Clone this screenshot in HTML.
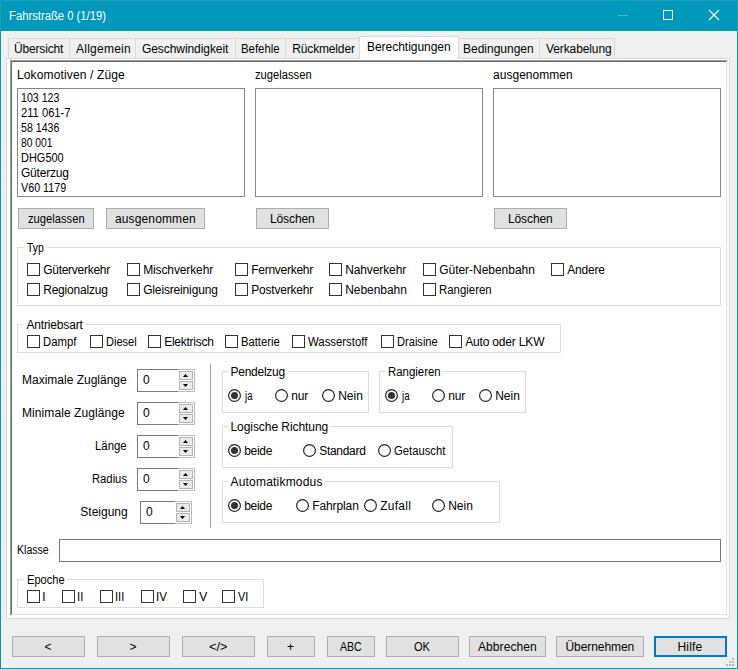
<!DOCTYPE html>
<html><head><meta charset="utf-8"><style>
html,body{margin:0;padding:0;width:738px;height:669px;overflow:hidden;background:#f0f0f0;position:relative}
body>div,body>svg{position:absolute}
.t{font-family:"Liberation Sans", sans-serif;line-height:15px;white-space:nowrap;transform-origin:0 0}
</style></head><body>
<div style="left:0px;top:0px;width:738px;height:31px;background:#0099bc"></div>
<div style="left:0px;top:0px;width:1px;height:669px;background:#0099bc"></div>
<div style="left:737px;top:0px;width:1px;height:669px;background:#0099bc"></div>
<div style="left:0px;top:668px;width:738px;height:1px;background:#0099bc"></div>
<div style="left:0px;top:0px;width:738px;height:1px;background:#1ba0c0"></div>
<div style="left:0px;top:0px;width:1px;height:31px;background:#1ba0c0"></div>
<div style="left:737px;top:0px;width:1px;height:31px;background:#1ba0c0"></div>
<div style="left:618px;top:15px;width:10px;height:1px;background:#4db8d0"></div>
<div style="left:663px;top:10px;width:10px;height:10px;border:1px solid #fff;box-sizing:border-box"></div>
<svg style="position:absolute;left:708px;top:9px" width="12" height="12" viewBox="0 0 12 12"><path d="M1 1L11 11M11 1L1 11" stroke="#fff" stroke-width="1.1"/></svg>
<div style="left:8px;top:38px;width:62px;height:21px;background:#f0f0f0;border:1px solid #d9d9d9;box-sizing:border-box"></div>
<div style="left:69px;top:38px;width:67px;height:21px;background:#f0f0f0;border:1px solid #d9d9d9;box-sizing:border-box"></div>
<div style="left:135px;top:38px;width:101px;height:21px;background:#f0f0f0;border:1px solid #d9d9d9;box-sizing:border-box"></div>
<div style="left:235px;top:38px;width:51px;height:21px;background:#f0f0f0;border:1px solid #d9d9d9;box-sizing:border-box"></div>
<div style="left:285px;top:38px;width:76px;height:21px;background:#f0f0f0;border:1px solid #d9d9d9;box-sizing:border-box"></div>
<div style="left:458px;top:38px;width:82px;height:21px;background:#f0f0f0;border:1px solid #d9d9d9;box-sizing:border-box"></div>
<div style="left:539px;top:38px;width:76px;height:21px;background:#f0f0f0;border:1px solid #d9d9d9;box-sizing:border-box"></div>
<div style="left:6px;top:58px;width:724px;height:561px;background:#fff;border:1px solid #d9d9d9;box-sizing:border-box"></div>
<div style="left:359px;top:36px;width:100px;height:23px;background:#fff;border:1px solid #d9d9d9;border-bottom:none;box-sizing:border-box"></div>
<div style="left:10px;top:60px;width:718px;height:556px;border-top:1px solid #a0a0a0;border-left:1px solid #a0a0a0;border-right:1px solid #fff;border-bottom:1px solid #fff;box-sizing:border-box"></div>
<div style="left:11px;top:61px;width:716px;height:554px;border-top:1px solid #696969;border-left:1px solid #696969;border-right:1px solid #e3e3e3;border-bottom:1px solid #e3e3e3;box-sizing:border-box"></div>
<div style="left:17px;top:88px;width:228px;height:109px;background:#fff;border:1px solid #828790;box-sizing:border-box"></div>
<div style="left:255px;top:88px;width:228px;height:109px;background:#fff;border:1px solid #828790;box-sizing:border-box"></div>
<div style="left:493px;top:88px;width:228px;height:109px;background:#fff;border:1px solid #828790;box-sizing:border-box"></div>
<div style="left:18px;top:208px;width:76px;height:21px;background:#e1e1e1;border:1px solid #adadad;box-sizing:border-box"></div>
<div style="left:106px;top:208px;width:99px;height:21px;background:#e1e1e1;border:1px solid #adadad;box-sizing:border-box"></div>
<div style="left:256px;top:208px;width:73px;height:21px;background:#e1e1e1;border:1px solid #adadad;box-sizing:border-box"></div>
<div style="left:494px;top:208px;width:73px;height:21px;background:#e1e1e1;border:1px solid #adadad;box-sizing:border-box"></div>
<div style="left:17px;top:247px;width:704px;height:59px;border:1px solid #dcdcdc;box-sizing:border-box"></div>
<div style="left:24px;top:246px;width:22px;height:3px;background:#fff"></div>
<div style="left:27px;top:263px;width:13px;height:13px;background:#fff;border:1px solid #333;box-sizing:border-box"></div>
<div style="left:127px;top:263px;width:13px;height:13px;background:#fff;border:1px solid #333;box-sizing:border-box"></div>
<div style="left:235px;top:263px;width:13px;height:13px;background:#fff;border:1px solid #333;box-sizing:border-box"></div>
<div style="left:329px;top:263px;width:13px;height:13px;background:#fff;border:1px solid #333;box-sizing:border-box"></div>
<div style="left:423px;top:263px;width:13px;height:13px;background:#fff;border:1px solid #333;box-sizing:border-box"></div>
<div style="left:551px;top:263px;width:13px;height:13px;background:#fff;border:1px solid #333;box-sizing:border-box"></div>
<div style="left:27px;top:283px;width:13px;height:13px;background:#fff;border:1px solid #333;box-sizing:border-box"></div>
<div style="left:127px;top:283px;width:13px;height:13px;background:#fff;border:1px solid #333;box-sizing:border-box"></div>
<div style="left:235px;top:283px;width:13px;height:13px;background:#fff;border:1px solid #333;box-sizing:border-box"></div>
<div style="left:329px;top:283px;width:13px;height:13px;background:#fff;border:1px solid #333;box-sizing:border-box"></div>
<div style="left:423px;top:283px;width:13px;height:13px;background:#fff;border:1px solid #333;box-sizing:border-box"></div>
<div style="left:17px;top:324px;width:544px;height:29px;border:1px solid #dcdcdc;box-sizing:border-box"></div>
<div style="left:24px;top:323px;width:62px;height:3px;background:#fff"></div>
<div style="left:27px;top:335px;width:13px;height:13px;background:#fff;border:1px solid #333;box-sizing:border-box"></div>
<div style="left:90px;top:335px;width:13px;height:13px;background:#fff;border:1px solid #333;box-sizing:border-box"></div>
<div style="left:148px;top:335px;width:13px;height:13px;background:#fff;border:1px solid #333;box-sizing:border-box"></div>
<div style="left:225px;top:335px;width:13px;height:13px;background:#fff;border:1px solid #333;box-sizing:border-box"></div>
<div style="left:292px;top:335px;width:13px;height:13px;background:#fff;border:1px solid #333;box-sizing:border-box"></div>
<div style="left:381px;top:335px;width:13px;height:13px;background:#fff;border:1px solid #333;box-sizing:border-box"></div>
<div style="left:449px;top:335px;width:13px;height:13px;background:#fff;border:1px solid #333;box-sizing:border-box"></div>
<div style="left:137px;top:369px;width:58px;height:23px;background:#fff;border:1px solid #7a7a7a;border-right-color:#b9bcc2;box-sizing:border-box"></div>
<div style="left:178px;top:369px;width:17px;height:23px;background:#fff;border:1px solid #b9bcc2;border-left:none;box-sizing:border-box"></div>
<div style="left:179px;top:371px;width:14px;height:9px;background:#eaeaea;border:1px solid #b4b4b4;box-sizing:border-box"></div>
<div style="left:179px;top:381px;width:14px;height:9px;background:#eaeaea;border:1px solid #b4b4b4;box-sizing:border-box"></div>
<svg style="position:absolute;left:183px;top:374px" width="5" height="3"><path d="M0 3L2.5 0L5 3Z" fill="#000"/></svg>
<svg style="position:absolute;left:183px;top:384px" width="5" height="3"><path d="M0 0L5 0L2.5 3Z" fill="#000"/></svg>
<div style="left:137px;top:402px;width:58px;height:23px;background:#fff;border:1px solid #7a7a7a;border-right-color:#b9bcc2;box-sizing:border-box"></div>
<div style="left:178px;top:402px;width:17px;height:23px;background:#fff;border:1px solid #b9bcc2;border-left:none;box-sizing:border-box"></div>
<div style="left:179px;top:404px;width:14px;height:9px;background:#eaeaea;border:1px solid #b4b4b4;box-sizing:border-box"></div>
<div style="left:179px;top:414px;width:14px;height:9px;background:#eaeaea;border:1px solid #b4b4b4;box-sizing:border-box"></div>
<svg style="position:absolute;left:183px;top:407px" width="5" height="3"><path d="M0 3L2.5 0L5 3Z" fill="#000"/></svg>
<svg style="position:absolute;left:183px;top:417px" width="5" height="3"><path d="M0 0L5 0L2.5 3Z" fill="#000"/></svg>
<div style="left:137px;top:435px;width:58px;height:23px;background:#fff;border:1px solid #7a7a7a;border-right-color:#b9bcc2;box-sizing:border-box"></div>
<div style="left:178px;top:435px;width:17px;height:23px;background:#fff;border:1px solid #b9bcc2;border-left:none;box-sizing:border-box"></div>
<div style="left:179px;top:437px;width:14px;height:9px;background:#eaeaea;border:1px solid #b4b4b4;box-sizing:border-box"></div>
<div style="left:179px;top:447px;width:14px;height:9px;background:#eaeaea;border:1px solid #b4b4b4;box-sizing:border-box"></div>
<svg style="position:absolute;left:183px;top:440px" width="5" height="3"><path d="M0 3L2.5 0L5 3Z" fill="#000"/></svg>
<svg style="position:absolute;left:183px;top:450px" width="5" height="3"><path d="M0 0L5 0L2.5 3Z" fill="#000"/></svg>
<div style="left:137px;top:468px;width:58px;height:23px;background:#fff;border:1px solid #7a7a7a;border-right-color:#b9bcc2;box-sizing:border-box"></div>
<div style="left:178px;top:468px;width:17px;height:23px;background:#fff;border:1px solid #b9bcc2;border-left:none;box-sizing:border-box"></div>
<div style="left:179px;top:470px;width:14px;height:9px;background:#eaeaea;border:1px solid #b4b4b4;box-sizing:border-box"></div>
<div style="left:179px;top:480px;width:14px;height:9px;background:#eaeaea;border:1px solid #b4b4b4;box-sizing:border-box"></div>
<svg style="position:absolute;left:183px;top:473px" width="5" height="3"><path d="M0 3L2.5 0L5 3Z" fill="#000"/></svg>
<svg style="position:absolute;left:183px;top:483px" width="5" height="3"><path d="M0 0L5 0L2.5 3Z" fill="#000"/></svg>
<div style="left:140px;top:501px;width:52px;height:23px;background:#fff;border:1px solid #7a7a7a;border-right-color:#b9bcc2;box-sizing:border-box"></div>
<div style="left:175px;top:501px;width:17px;height:23px;background:#fff;border:1px solid #b9bcc2;border-left:none;box-sizing:border-box"></div>
<div style="left:176px;top:503px;width:14px;height:9px;background:#eaeaea;border:1px solid #b4b4b4;box-sizing:border-box"></div>
<div style="left:176px;top:513px;width:14px;height:9px;background:#eaeaea;border:1px solid #b4b4b4;box-sizing:border-box"></div>
<svg style="position:absolute;left:180px;top:506px" width="5" height="3"><path d="M0 3L2.5 0L5 3Z" fill="#000"/></svg>
<svg style="position:absolute;left:180px;top:516px" width="5" height="3"><path d="M0 0L5 0L2.5 3Z" fill="#000"/></svg>
<div style="left:210px;top:364px;width:1px;height:164px;background:#a0a0a0"></div>
<div style="left:222px;top:371px;width:147px;height:42px;border:1px solid #dcdcdc;box-sizing:border-box"></div>
<div style="left:228px;top:370px;width:59px;height:3px;background:#fff"></div>
<svg style="position:absolute;left:228px;top:389px" width="13" height="13" viewBox="0 0 13 13"><circle cx="6.5" cy="6.5" r="5.9" fill="#fff" stroke="#262626" stroke-width="1.2"/><circle cx="6.5" cy="6.5" r="3.5" fill="#333"/></svg>
<svg style="position:absolute;left:275px;top:389px" width="13" height="13" viewBox="0 0 13 13"><circle cx="6.5" cy="6.5" r="5.9" fill="#fff" stroke="#262626" stroke-width="1.2"/></svg>
<svg style="position:absolute;left:322px;top:389px" width="13" height="13" viewBox="0 0 13 13"><circle cx="6.5" cy="6.5" r="5.9" fill="#fff" stroke="#262626" stroke-width="1.2"/></svg>
<div style="left:379px;top:371px;width:147px;height:42px;border:1px solid #dcdcdc;box-sizing:border-box"></div>
<div style="left:385px;top:370px;width:57px;height:3px;background:#fff"></div>
<svg style="position:absolute;left:385px;top:389px" width="13" height="13" viewBox="0 0 13 13"><circle cx="6.5" cy="6.5" r="5.9" fill="#fff" stroke="#262626" stroke-width="1.2"/><circle cx="6.5" cy="6.5" r="3.5" fill="#333"/></svg>
<svg style="position:absolute;left:432px;top:389px" width="13" height="13" viewBox="0 0 13 13"><circle cx="6.5" cy="6.5" r="5.9" fill="#fff" stroke="#262626" stroke-width="1.2"/></svg>
<svg style="position:absolute;left:479px;top:389px" width="13" height="13" viewBox="0 0 13 13"><circle cx="6.5" cy="6.5" r="5.9" fill="#fff" stroke="#262626" stroke-width="1.2"/></svg>
<div style="left:222px;top:426px;width:231px;height:42px;border:1px solid #dcdcdc;box-sizing:border-box"></div>
<div style="left:228px;top:425px;width:102px;height:3px;background:#fff"></div>
<svg style="position:absolute;left:228px;top:444px" width="13" height="13" viewBox="0 0 13 13"><circle cx="6.5" cy="6.5" r="5.9" fill="#fff" stroke="#262626" stroke-width="1.2"/><circle cx="6.5" cy="6.5" r="3.5" fill="#333"/></svg>
<svg style="position:absolute;left:303px;top:444px" width="13" height="13" viewBox="0 0 13 13"><circle cx="6.5" cy="6.5" r="5.9" fill="#fff" stroke="#262626" stroke-width="1.2"/></svg>
<svg style="position:absolute;left:378px;top:444px" width="13" height="13" viewBox="0 0 13 13"><circle cx="6.5" cy="6.5" r="5.9" fill="#fff" stroke="#262626" stroke-width="1.2"/></svg>
<div style="left:222px;top:481px;width:278px;height:42px;border:1px solid #dcdcdc;box-sizing:border-box"></div>
<div style="left:228px;top:480px;width:97px;height:3px;background:#fff"></div>
<svg style="position:absolute;left:228px;top:499px" width="13" height="13" viewBox="0 0 13 13"><circle cx="6.5" cy="6.5" r="5.9" fill="#fff" stroke="#262626" stroke-width="1.2"/><circle cx="6.5" cy="6.5" r="3.5" fill="#333"/></svg>
<svg style="position:absolute;left:296px;top:499px" width="13" height="13" viewBox="0 0 13 13"><circle cx="6.5" cy="6.5" r="5.9" fill="#fff" stroke="#262626" stroke-width="1.2"/></svg>
<svg style="position:absolute;left:364px;top:499px" width="13" height="13" viewBox="0 0 13 13"><circle cx="6.5" cy="6.5" r="5.9" fill="#fff" stroke="#262626" stroke-width="1.2"/></svg>
<svg style="position:absolute;left:432px;top:499px" width="13" height="13" viewBox="0 0 13 13"><circle cx="6.5" cy="6.5" r="5.9" fill="#fff" stroke="#262626" stroke-width="1.2"/></svg>
<div style="left:59px;top:539px;width:662px;height:23px;background:#fff;border:1px solid #7a7a7a;box-sizing:border-box"></div>
<div style="left:17px;top:579px;width:247px;height:29px;border:1px solid #dcdcdc;box-sizing:border-box"></div>
<div style="left:24px;top:578px;width:43px;height:3px;background:#fff"></div>
<div style="left:27px;top:590px;width:13px;height:13px;background:#fff;border:1px solid #333;box-sizing:border-box"></div>
<div style="left:62px;top:590px;width:13px;height:13px;background:#fff;border:1px solid #333;box-sizing:border-box"></div>
<div style="left:100px;top:590px;width:13px;height:13px;background:#fff;border:1px solid #333;box-sizing:border-box"></div>
<div style="left:141px;top:590px;width:13px;height:13px;background:#fff;border:1px solid #333;box-sizing:border-box"></div>
<div style="left:183px;top:590px;width:13px;height:13px;background:#fff;border:1px solid #333;box-sizing:border-box"></div>
<div style="left:222px;top:590px;width:13px;height:13px;background:#fff;border:1px solid #333;box-sizing:border-box"></div>
<div style="left:12px;top:636px;width:73px;height:21px;background:#e1e1e1;border:1px solid #adadad;box-sizing:border-box"></div>
<div style="left:97px;top:636px;width:73px;height:21px;background:#e1e1e1;border:1px solid #adadad;box-sizing:border-box"></div>
<div style="left:182px;top:636px;width:73px;height:21px;background:#e1e1e1;border:1px solid #adadad;box-sizing:border-box"></div>
<div style="left:267px;top:636px;width:48px;height:21px;background:#e1e1e1;border:1px solid #adadad;box-sizing:border-box"></div>
<div style="left:327px;top:636px;width:48px;height:21px;background:#e1e1e1;border:1px solid #adadad;box-sizing:border-box"></div>
<div style="left:386px;top:636px;width:73px;height:21px;background:#e1e1e1;border:1px solid #adadad;box-sizing:border-box"></div>
<div style="left:469px;top:636px;width:77px;height:21px;background:#e1e1e1;border:1px solid #adadad;box-sizing:border-box"></div>
<div style="left:556px;top:636px;width:88px;height:21px;background:#e1e1e1;border:1px solid #adadad;box-sizing:border-box"></div>
<div style="left:654px;top:636px;width:73px;height:21px;background:#e1e1e1;border:2px solid #0078d7;box-sizing:border-box"></div>
<div style="left:732px;top:658px;width:2px;height:2px;background:#b8b8b8"></div>
<div style="left:732px;top:661px;width:2px;height:2px;background:#b8b8b8"></div>
<div style="left:729px;top:661px;width:2px;height:2px;background:#b8b8b8"></div>
<div style="left:732px;top:664px;width:2px;height:2px;background:#b8b8b8"></div>
<div style="left:729px;top:664px;width:2px;height:2px;background:#b8b8b8"></div>
<div style="left:726px;top:664px;width:2px;height:2px;background:#b8b8b8"></div>
<div class="t" style="left:9.20px;top:9.34px;font-size:12px;color:#fff;transform:scaleX(0.9383)">Fahrstraße 0 (1/19)</div>
<div class="t" style="left:14.00px;top:42.34px;font-size:12px;color:#000;letter-spacing:-0.169px">Übersicht</div>
<div class="t" style="left:76.00px;top:42.34px;font-size:12px;color:#000;letter-spacing:0.248px">Allgemein</div>
<div class="t" style="left:142.00px;top:42.34px;font-size:12px;color:#000;letter-spacing:-0.074px">Geschwindigkeit</div>
<div class="t" style="left:241.00px;top:42.34px;font-size:12px;color:#000;transform:scaleX(0.9506)">Befehle</div>
<div class="t" style="left:292.30px;top:42.34px;font-size:12px;color:#000;letter-spacing:-0.158px">Rückmelder</div>
<div class="t" style="left:463.00px;top:42.34px;font-size:12px;color:#000;letter-spacing:-0.006px">Bedingungen</div>
<div class="t" style="left:546.00px;top:42.34px;font-size:12px;color:#000;letter-spacing:-0.105px">Verkabelung</div>
<div class="t" style="left:367.00px;top:40.34px;font-size:12px;color:#000;letter-spacing:-0.030px">Berechtigungen</div>
<div class="t" style="left:17.00px;top:68.34px;font-size:12px;color:#000;letter-spacing:0.134px">Lokomotiven / Züge</div>
<div class="t" style="left:255.00px;top:68.34px;font-size:12px;color:#000;transform:scaleX(0.9328)">zugelassen</div>
<div class="t" style="left:493.00px;top:68.34px;font-size:12px;color:#000;letter-spacing:0.029px">ausgenommen</div>
<div class="t" style="left:21.00px;top:91.34px;font-size:12px;color:#000;transform:scaleX(0.8832)">103 123</div>
<div class="t" style="left:21.00px;top:106.34px;font-size:12px;color:#000;transform:scaleX(0.9311)">211 061-7</div>
<div class="t" style="left:21.00px;top:121.34px;font-size:12px;color:#000;transform:scaleX(0.8832)">58 1436</div>
<div class="t" style="left:21.00px;top:136.34px;font-size:12px;color:#000;transform:scaleX(0.8588)">80 001</div>
<div class="t" style="left:21.00px;top:151.34px;font-size:12px;color:#000;transform:scaleX(0.9146)">DHG500</div>
<div class="t" style="left:21.00px;top:166.34px;font-size:12px;color:#000;letter-spacing:-0.212px">Güterzug</div>
<div class="t" style="left:21.00px;top:181.34px;font-size:12px;color:#000;transform:scaleX(0.8954)">V60 1179</div>
<div class="t" style="left:27.50px;top:212.34px;font-size:12px;color:#000;transform:scaleX(0.9328)">zugelassen</div>
<div class="t" style="left:115.00px;top:212.34px;font-size:12px;color:#000;letter-spacing:0.129px">ausgenommen</div>
<div class="t" style="left:270.00px;top:212.34px;font-size:12px;color:#000;letter-spacing:-0.116px">Löschen</div>
<div class="t" style="left:508.00px;top:212.34px;font-size:12px;color:#000;letter-spacing:-0.116px">Löschen</div>
<div class="t" style="left:26.50px;top:241.34px;font-size:12px;color:#000;transform:scaleX(0.8643)">Typ</div>
<div class="t" style="left:43.20px;top:263.34px;font-size:12px;color:#000;letter-spacing:-0.275px">Güterverkehr</div>
<div class="t" style="left:143.20px;top:263.34px;font-size:12px;color:#000;letter-spacing:-0.123px">Mischverkehr</div>
<div class="t" style="left:251.20px;top:263.34px;font-size:12px;color:#000;letter-spacing:-0.269px">Fernverkehr</div>
<div class="t" style="left:345.20px;top:263.34px;font-size:12px;color:#000;letter-spacing:-0.115px">Nahverkehr</div>
<div class="t" style="left:439.20px;top:263.34px;font-size:12px;color:#000;letter-spacing:-0.028px">Güter-Nebenbahn</div>
<div class="t" style="left:567.20px;top:263.34px;font-size:12px;color:#000;letter-spacing:-0.204px">Andere</div>
<div class="t" style="left:43.20px;top:283.34px;font-size:12px;color:#000;letter-spacing:-0.204px">Regionalzug</div>
<div class="t" style="left:143.20px;top:283.34px;font-size:12px;color:#000;letter-spacing:-0.157px">Gleisreinigung</div>
<div class="t" style="left:251.20px;top:283.34px;font-size:12px;color:#000;letter-spacing:-0.203px">Postverkehr</div>
<div class="t" style="left:345.20px;top:283.34px;font-size:12px;color:#000;letter-spacing:-0.048px">Nebenbahn</div>
<div class="t" style="left:439.20px;top:283.34px;font-size:12px;color:#000;transform:scaleX(0.9507)">Rangieren</div>
<div class="t" style="left:26.50px;top:318.34px;font-size:12px;color:#000;letter-spacing:-0.169px">Antriebsart</div>
<div class="t" style="left:43.20px;top:335.34px;font-size:12px;color:#000;transform:scaleX(0.9442)">Dampf</div>
<div class="t" style="left:106.20px;top:335.34px;font-size:12px;color:#000;transform:scaleX(0.9180)">Diesel</div>
<div class="t" style="left:164.20px;top:335.34px;font-size:12px;color:#000;letter-spacing:-0.260px">Elektrisch</div>
<div class="t" style="left:241.20px;top:335.34px;font-size:12px;color:#000;transform:scaleX(0.9357)">Batterie</div>
<div class="t" style="left:308.20px;top:335.34px;font-size:12px;color:#000;transform:scaleX(0.9471)">Wasserstoff</div>
<div class="t" style="left:397.20px;top:335.34px;font-size:12px;color:#000;transform:scaleX(0.9246)">Draisine</div>
<div class="t" style="left:465.20px;top:335.34px;font-size:12px;color:#000;letter-spacing:-0.171px">Auto oder LKW</div>
<div class="t" style="left:22.00px;top:373.34px;font-size:12px;color:#000;letter-spacing:-0.003px">Maximale Zuglänge</div>
<div class="t" style="left:143.00px;top:373.34px;font-size:12px;color:#000;letter-spacing:0.000px">0</div>
<div class="t" style="left:22.00px;top:406.34px;font-size:12px;color:#000;letter-spacing:0.081px">Minimale Zuglänge</div>
<div class="t" style="left:143.00px;top:406.34px;font-size:12px;color:#000;letter-spacing:0.000px">0</div>
<div class="t" style="left:95.00px;top:439.34px;font-size:12px;color:#000;transform:scaleX(0.9497)">Länge</div>
<div class="t" style="left:143.00px;top:439.34px;font-size:12px;color:#000;letter-spacing:0.000px">0</div>
<div class="t" style="left:92.00px;top:472.34px;font-size:12px;color:#000;transform:scaleX(0.9370)">Radius</div>
<div class="t" style="left:143.00px;top:472.34px;font-size:12px;color:#000;letter-spacing:0.000px">0</div>
<div class="t" style="left:80.30px;top:505.34px;font-size:12px;color:#000;letter-spacing:0.000px">Steigung</div>
<div class="t" style="left:146.00px;top:505.34px;font-size:12px;color:#000;letter-spacing:0.000px">0</div>
<div class="t" style="left:230.50px;top:365.34px;font-size:12px;color:#000;letter-spacing:-0.255px">Pendelzug</div>
<div class="t" style="left:245.01px;top:389.34px;font-size:12px;color:#000;transform:scaleX(0.8063)">ja</div>
<div class="t" style="left:291.20px;top:389.34px;font-size:12px;color:#000;letter-spacing:-0.174px">nur</div>
<div class="t" style="left:338.20px;top:389.34px;font-size:12px;color:#000;letter-spacing:-0.002px">Nein</div>
<div class="t" style="left:387.50px;top:365.34px;font-size:12px;color:#000;transform:scaleX(0.9507)">Rangieren</div>
<div class="t" style="left:402.01px;top:389.34px;font-size:12px;color:#000;transform:scaleX(0.8063)">ja</div>
<div class="t" style="left:448.20px;top:389.34px;font-size:12px;color:#000;letter-spacing:-0.174px">nur</div>
<div class="t" style="left:495.20px;top:389.34px;font-size:12px;color:#000;letter-spacing:-0.002px">Nein</div>
<div class="t" style="left:230.50px;top:420.34px;font-size:12px;color:#000;letter-spacing:-0.066px">Logische Richtung</div>
<div class="t" style="left:244.20px;top:444.34px;font-size:12px;color:#000;letter-spacing:-0.297px">beide</div>
<div class="t" style="left:319.20px;top:444.34px;font-size:12px;color:#000;letter-spacing:-0.290px">Standard</div>
<div class="t" style="left:394.20px;top:444.34px;font-size:12px;color:#000;transform:scaleX(0.9393)">Getauscht</div>
<div class="t" style="left:230.50px;top:475.34px;font-size:12px;color:#000;letter-spacing:0.202px">Automatikmodus</div>
<div class="t" style="left:244.20px;top:499.34px;font-size:12px;color:#000;letter-spacing:-0.297px">beide</div>
<div class="t" style="left:312.20px;top:499.34px;font-size:12px;color:#000;letter-spacing:-0.098px">Fahrplan</div>
<div class="t" style="left:380.20px;top:499.34px;font-size:12px;color:#000;letter-spacing:0.264px">Zufall</div>
<div class="t" style="left:448.20px;top:499.34px;font-size:12px;color:#000;letter-spacing:-0.002px">Nein</div>
<div class="t" style="left:17.00px;top:543.34px;font-size:12px;color:#000;transform:scaleX(0.8805)">Klasse</div>
<div class="t" style="left:26.50px;top:573.34px;font-size:12px;color:#000;transform:scaleX(0.9263)">Epoche</div>
<div class="t" style="left:42.20px;top:590.34px;font-size:12px;color:#000;letter-spacing:0.000px">I</div>
<div class="t" style="left:77.26px;top:590.34px;font-size:12px;color:#000;transform:scaleX(0.9374)">II</div>
<div class="t" style="left:115.28px;top:590.34px;font-size:12px;color:#000;transform:scaleX(0.9229)">III</div>
<div class="t" style="left:156.23px;top:590.34px;font-size:12px;color:#000;transform:scaleX(0.9677)">IV</div>
<div class="t" style="left:199.20px;top:590.34px;font-size:12px;color:#000;letter-spacing:0.000px">V</div>
<div class="t" style="left:238.20px;top:590.34px;font-size:12px;color:#000;transform:scaleX(0.9088)">VI</div>
<div class="t" style="left:44.50px;top:640.34px;font-size:12px;color:#000;letter-spacing:0.000px">&lt;</div>
<div class="t" style="left:129.50px;top:640.34px;font-size:12px;color:#000;letter-spacing:0.000px">&gt;</div>
<div class="t" style="left:208.85px;top:640.34px;font-size:12px;color:#000;transform:scaleX(1.0553)">&lt;/&gt;</div>
<div class="t" style="left:287.00px;top:640.34px;font-size:12px;color:#000;letter-spacing:0.000px">+</div>
<div class="t" style="left:339.50px;top:640.34px;font-size:12px;color:#000;transform:scaleX(0.8797)">ABC</div>
<div class="t" style="left:414.00px;top:640.34px;font-size:12px;color:#000;transform:scaleX(0.9230)">OK</div>
<div class="t" style="left:478.00px;top:640.34px;font-size:12px;color:#000;letter-spacing:0.079px">Abbrechen</div>
<div class="t" style="left:565.50px;top:640.34px;font-size:12px;color:#000;letter-spacing:-0.078px">Übernehmen</div>
<div class="t" style="left:677.50px;top:640.34px;font-size:12px;color:#000;letter-spacing:0.167px">Hilfe</div>
</body></html>
